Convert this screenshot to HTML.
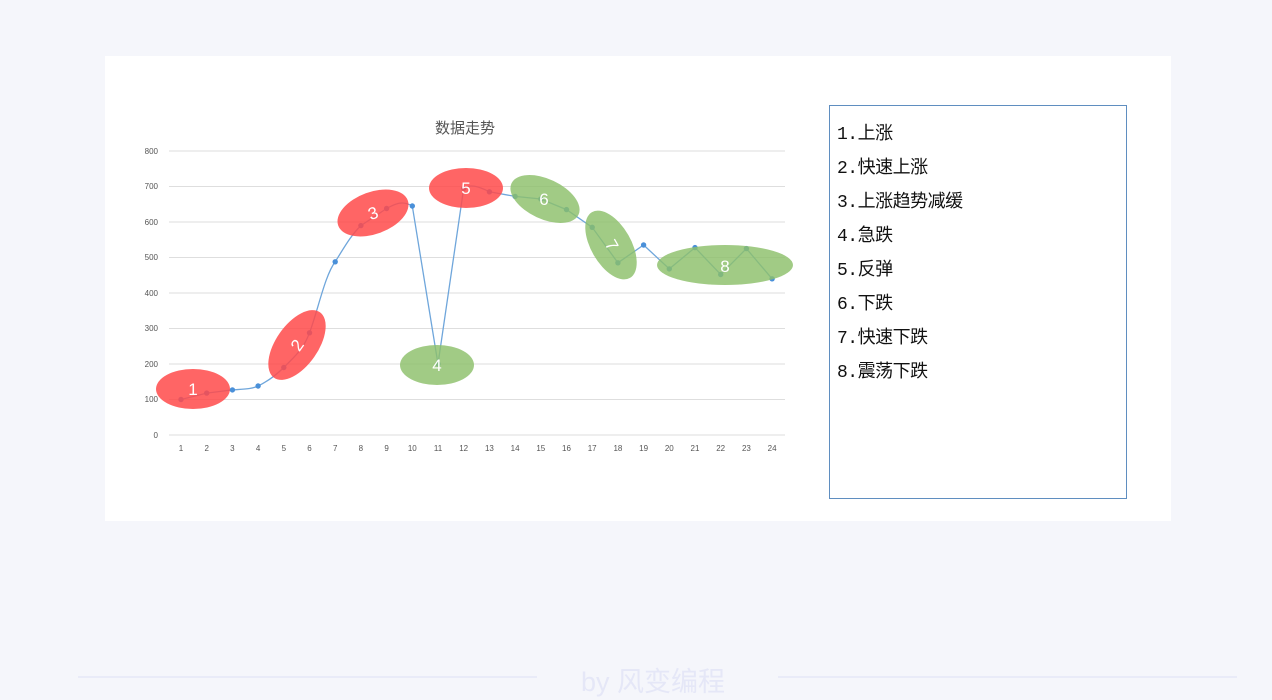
<!DOCTYPE html>
<html><head><meta charset="utf-8"><style>
html,body{margin:0;padding:0;background:#f5f6fb;width:1272px;height:700px;overflow:hidden;font-family:"Liberation Sans","Noto Sans CJK SC",sans-serif}
.card{position:absolute;left:105px;top:56px;width:1066px;height:465px;background:#fff}
.legend{position:absolute;left:829px;top:105px;width:296px;height:392px;border:1px solid #5f8ec0;background:#fff}
.legend div{position:absolute;left:7px;font-size:18px;color:#111;line-height:20px;font-family:"Liberation Mono","Noto Sans CJK SC",monospace;letter-spacing:-0.5px}
.foot{position:absolute;top:660px;left:0;width:1306px;text-align:center;font-size:27px;color:#e5e7f7}
.ln{position:absolute;top:676px;height:2px;background:#e9ebf8}
</style></head><body>
<div class="card"></div>
<svg style="position:absolute;left:0;top:0" width="1272" height="700">
<text x="465" y="133" font-size="15" fill="#555" text-anchor="middle" font-family="Noto Sans CJK SC,sans-serif">数据走势</text>
<g stroke="#dedede" stroke-width="1">
<line x1="169" y1="151" x2="785" y2="151"/><line x1="169" y1="186.5" x2="785" y2="186.5"/><line x1="169" y1="222" x2="785" y2="222"/><line x1="169" y1="257.5" x2="785" y2="257.5"/><line x1="169" y1="293" x2="785" y2="293"/><line x1="169" y1="328.5" x2="785" y2="328.5"/><line x1="169" y1="364" x2="785" y2="364"/><line x1="169" y1="399.5" x2="785" y2="399.5"/><line x1="169" y1="435" x2="785" y2="435"/>
</g>
<g font-size="8" fill="#555" text-anchor="end">
<text x="158" y="154">800</text><text x="158" y="189">700</text><text x="158" y="225">600</text><text x="158" y="260">500</text><text x="158" y="296">400</text><text x="158" y="331">300</text><text x="158" y="367">200</text><text x="158" y="402">100</text><text x="158" y="438">0</text>
</g>
<g font-size="8" fill="#555" text-anchor="middle">
<text x="181" y="451">1</text><text x="206.7" y="451">2</text><text x="232.4" y="451">3</text><text x="258.1" y="451">4</text><text x="283.8" y="451">5</text><text x="309.5" y="451">6</text><text x="335.2" y="451">7</text><text x="360.9" y="451">8</text><text x="386.6" y="451">9</text><text x="412.3" y="451">10</text><text x="438" y="451">11</text><text x="463.7" y="451">12</text><text x="489.4" y="451">13</text><text x="515.1" y="451">14</text><text x="540.8" y="451">15</text><text x="566.5" y="451">16</text><text x="592.2" y="451">17</text><text x="617.9" y="451">18</text><text x="643.6" y="451">19</text><text x="669.3" y="451">20</text><text x="695" y="451">21</text><text x="720.7" y="451">22</text><text x="746.4" y="451">23</text><text x="772.1" y="451">24</text>
</g>
<path fill="none" stroke="#6fa6db" stroke-width="1.3" d="M181,399.5 L206.7,393.1 L232.4,389.9 C245,389 252,389 258.1,386 C270,380 277,374 283.8,367.5 C295,356 303,350 309.5,332.8 C318,310 325,275 335.2,261.8 C345,246 352,234 360.9,225.6 L386.6,208.5 C395,204 402,200 412.3,206 L438,364 L463.7,188.3 C470,184 478,186 489.4,191.8 L515.1,196.4 L540.8,199 L566.5,209.6 L592.2,227.3 L617.9,262.8 L643.6,245 L669.3,268.9 L695,247.6 L720.7,274.5 L746.4,248.6 L772.1,278.8"/>
<g fill="#4a90d9">
<circle cx="181" cy="399.5" r="2.7"/><circle cx="206.7" cy="393.1" r="2.7"/><circle cx="232.4" cy="389.9" r="2.7"/><circle cx="258.1" cy="386" r="2.7"/><circle cx="283.8" cy="367.5" r="2.7"/><circle cx="309.5" cy="332.8" r="2.7"/><circle cx="335.2" cy="261.8" r="2.7"/><circle cx="360.9" cy="225.6" r="2.7"/><circle cx="386.6" cy="208.5" r="2.7"/><circle cx="412.3" cy="206" r="2.7"/><circle cx="438" cy="364" r="2.7"/><circle cx="463.7" cy="188.3" r="2.7"/><circle cx="489.4" cy="191.8" r="2.7"/><circle cx="515.1" cy="196.4" r="2.7"/><circle cx="540.8" cy="199" r="2.7"/><circle cx="566.5" cy="209.6" r="2.7"/><circle cx="592.2" cy="227.3" r="2.7"/><circle cx="617.9" cy="262.8" r="2.7"/><circle cx="643.6" cy="245" r="2.7"/><circle cx="669.3" cy="268.9" r="2.7"/><circle cx="695" cy="247.6" r="2.7"/><circle cx="720.7" cy="274.5" r="2.7"/><circle cx="746.4" cy="248.6" r="2.7"/><circle cx="772.1" cy="278.8" r="2.7"/>
</g>
<g fill="#ff4a4a" fill-opacity="0.85">
<ellipse cx="193" cy="389" rx="37" ry="20"/>
<ellipse cx="297" cy="345" rx="40" ry="21" transform="rotate(-55 297 345)"/>
<ellipse cx="373" cy="213" rx="37" ry="21" transform="rotate(-20 373 213)"/>
<ellipse cx="466" cy="188" rx="37" ry="20"/>
</g>
<g fill="#8cc06a" fill-opacity="0.82">
<ellipse cx="437" cy="365" rx="37" ry="20"/>
<ellipse cx="545" cy="199" rx="37" ry="20" transform="rotate(25 545 199)"/>
<ellipse cx="611" cy="245" rx="38" ry="20" transform="rotate(60 611 245)"/>
<ellipse cx="725" cy="265" rx="68" ry="20"/>
</g>
<g fill="#fff" font-size="17" text-anchor="middle">
<text x="193" y="395">1</text>
<text x="297" y="351" transform="rotate(-55 297 345)">2</text>
<text x="373" y="219" transform="rotate(-20 373 213)">3</text>
<text x="437" y="371">4</text>
<text x="466" y="194">5</text>
<text x="544" y="205">6</text>
<text x="612" y="251" transform="rotate(60 612 245)">7</text>
<text x="725" y="272">8</text>
</g>
</svg>
<div class="legend">
<div style="top:19px">1.上涨</div>
<div style="top:53px">2.快速上涨</div>
<div style="top:87px">3.上涨趋势减缓</div>
<div style="top:121px">4.急跌</div>
<div style="top:155px">5.反弹</div>
<div style="top:189px">6.下跌</div>
<div style="top:223px">7.快速下跌</div>
<div style="top:257px">8.震荡下跌</div>
</div>
<div class="ln" style="left:78px;width:459px"></div>
<div class="ln" style="left:778px;width:459px"></div>
<div class="foot">by 风变编程</div>
</body></html>
